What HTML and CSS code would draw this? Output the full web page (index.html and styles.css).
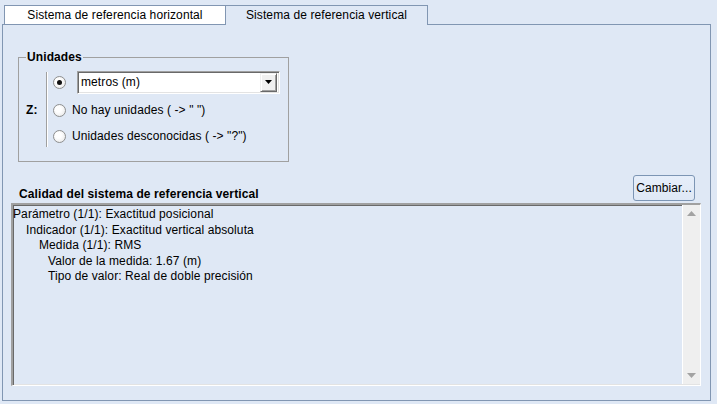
FILE: index.html
```html
<!DOCTYPE html>
<html lang="es">
<head>
<meta charset="utf-8">
<title>Sistema de referencia vertical</title>
<link rel="stylesheet" href="styles.css">
</head>
<body>
<div class="window">
  <div class="tabs">
    <div class="tab tab-h">Sistema de referencia horizontal</div>
    <div class="tab tab-v active">Sistema de referencia vertical</div>
  </div>
  <div class="panel">
    <fieldset class="group">
      <legend class="group-title">Unidades</legend>
      <div class="zrow">
        <div class="zlabel">Z:</div>
        <div class="sep"></div>
        <div class="options">
          <div class="opt opt-first">
            <span class="radio checked"></span>
            <div class="combo sunken">
              <span class="combo-text">metros (m)</span>
              <span class="combo-btn">
                <svg width="7" height="4" viewBox="0 0 7 4"><path d="M0 0H7L3.5 4Z" fill="#000"/></svg>
              </span>
            </div>
          </div>
          <div class="opt opt-second">
            <span class="radio"></span>
            <span class="opt-label">No hay unidades ( -&gt; " ")</span>
          </div>
          <div class="opt">
            <span class="radio"></span>
            <span class="opt-label">Unidades desconocidas ( -&gt; "?")</span>
          </div>
        </div>
      </div>
    </fieldset>

    <div class="quality">
      <div class="quality-head">
        <div class="quality-title">Calidad del sistema de referencia vertical</div>
        <button class="btn">Cambiar...</button>
      </div>
      <div class="listbox sunken">
        <div class="lines">
          <div class="line l0">Parámetro (1/1): Exactitud posicional</div>
          <div class="line l1">Indicador (1/1): Exactitud vertical absoluta</div>
          <div class="line l2">Medida (1/1): RMS</div>
          <div class="line l3">Valor de la medida: 1.67 (m)</div>
          <div class="line l3">Tipo de valor: Real de doble precisión</div>
        </div>
        <div class="scrollbar">
          <svg class="arrow" width="9" height="5" viewBox="0 0 9 5"><path d="M4.5 0L9 5H0Z" fill="#a3a3a3"/></svg>
          <svg class="arrow" width="9" height="5" viewBox="0 0 9 5"><path d="M0 0H9L4.5 5Z" fill="#a3a3a3"/></svg>
        </div>
      </div>
    </div>
  </div>
</div>
</body>
</html>
```

FILE: styles.css
```css
html, body {
  margin: 0;
  padding: 0;
}

body {
  width: 717px;
  height: 404px;
  overflow: hidden;
  background: #dfe8f5;
  font-family: "Liberation Sans", Arial, sans-serif;
  font-size: 12px;
  letter-spacing: 0.1px;
  color: #000;
}

.window {
  padding: 5px 6px 0 2px;
}

/* ---------- tabs ---------- */
.tabs {
  display: flex;
  padding-left: 2px;
  height: 19px;
}

.tab {
  box-sizing: border-box;
  height: 19px;
  border: 1px solid #8196b2;
  border-bottom: none;
  line-height: 19px;
  text-align: center;
  white-space: nowrap;
}

.tab-h {
  width: 222px;
  background: #fff;
}

.tab-v {
  width: 202px;
  border-left: none;
}

.tab.active {
  height: 20px;
  background: #dfe8f5;
  position: relative;
  z-index: 1;
}

/* ---------- panel ---------- */
.panel {
  box-sizing: border-box;
  height: 377px;
  border: 1px solid #8196b2;
}

/* ---------- group box ---------- */
.group {
  box-sizing: border-box;
  width: 271px;
  margin: 25px 0 0 15px;
  padding: 5px 0 12px 7px;
  border: 1px solid #a0a0a0;
  min-width: 0;
}

.group-title {
  padding: 0 1px;
  font-weight: bold;
  line-height: 15px;
}

.zrow {
  display: flex;
  align-items: stretch;
}

.zlabel {
  width: 20px;
  font-weight: bold;
  display: flex;
  align-items: center;
}

.sep {
  width: 1px;
  margin: 2px 0;
  background: #a0a0a0;
  box-shadow: 1px 0 0 #fff;
}

.options {
  padding-left: 6px;
  display: flex;
  flex-direction: column;
}

.opt {
  display: flex;
  align-items: center;
  height: 26px;
}

.opt-first {
  height: 24px;
}

.opt-second {
  margin-top: 3px;
}

.radio {
  box-sizing: border-box;
  width: 13px;
  height: 13px;
  border-radius: 50%;
  border: 1px solid #8e8f8f;
  background: radial-gradient(circle at 40% 40%, #ffffff 30%, #e3e3e3 100%);
  margin-right: 6px;
  display: flex;
  align-items: center;
  justify-content: center;
  flex: none;
}

.radio.checked::after {
  content: "";
  width: 5px;
  height: 5px;
  border-radius: 50%;
  background: #111;
}

.opt-label {
  white-space: nowrap;
}

/* sunken 3D border */
.sunken {
  box-sizing: border-box;
  border: 1px solid;
  border-color: #a0a0a0 #ffffff #ffffff #a0a0a0;
  box-shadow: inset 1px 1px 0 #696969, inset -1px -1px 0 #e3e3e3;
}

.combo {
  width: 203px;
  height: 23px;
  margin-left: 5px;
  background: #fff;
  display: flex;
  align-items: center;
  padding: 2px;
}

.combo-text {
  flex: 1;
  padding-left: 1px;
}

.combo-btn {
  box-sizing: border-box;
  width: 17px;
  height: 19px;
  background: #f0f0f0;
  border: 1px solid;
  border-color: #f0f0f0 #696969 #696969 #f0f0f0;
  box-shadow: inset 1px 1px 0 #fff, inset -1px -1px 0 #a0a0a0;
  display: flex;
  align-items: center;
  justify-content: center;
}

/* ---------- quality section ---------- */
.quality {
  margin: 13px 9px 0 8px;
}

.quality-head {
  display: flex;
  align-items: flex-end;
  justify-content: space-between;
  height: 26px;
}

.quality-title {
  font-weight: bold;
  padding-left: 8px;
  line-height: 14px;
  margin-bottom: 0;
}

.btn {
  box-sizing: border-box;
  width: 62px;
  height: 26px;
  margin-right: 6px;
  padding: 0;
  border: 1px solid #7c95b4;
  border-radius: 3px;
  background: linear-gradient(#e6eefa, #dfe8f5);
  font: inherit;
  letter-spacing: 0.1px;
  color: #000;
}

.listbox {
  margin-top: 2px;
  height: 183px;
  display: flex;
  border-width: 2px 1px 1px 2px;
}

.lines {
  flex: 1;
  padding-top: 2px;
}

.line {
  line-height: 15.5px;
  white-space: nowrap;
}

.l1 { padding-left: 13px; }
.l2 { padding-left: 26px; }
.l3 { padding-left: 35px; }

.scrollbar {
  width: 17px;
  background: #efefef;
  border-left: 1px solid #fff;
  display: flex;
  flex-direction: column;
  justify-content: space-between;
  align-items: center;
  padding: 6px 0 6px;
  margin-bottom: 1px;
}
```
